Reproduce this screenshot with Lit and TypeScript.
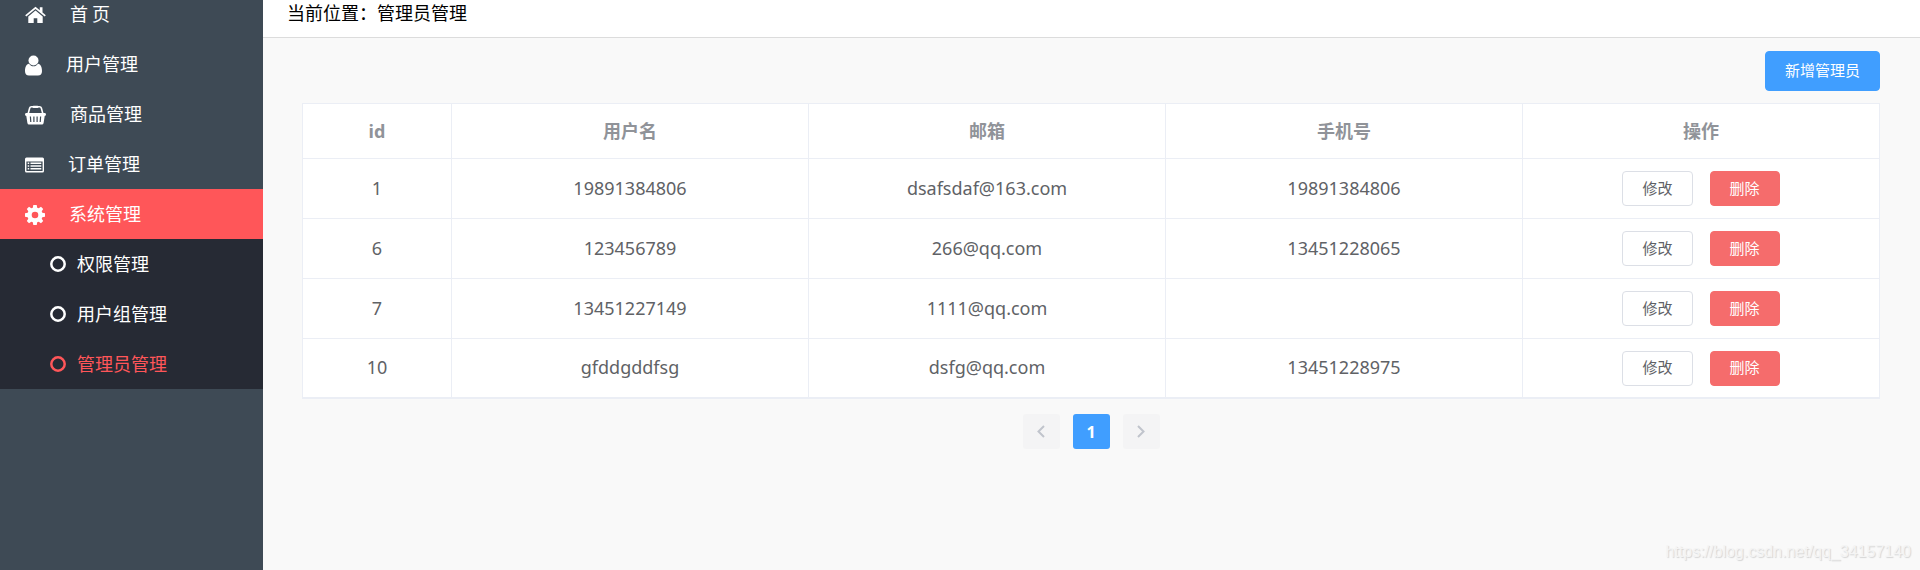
import { LitElement, html, css, svg } from "lit";
import { customElement, state } from "lit/decorators.js";

interface Admin {
  id: number;
  name: string;
  email: string;
  phone: string;
}

const icons = {
  home: svg`<svg class="glyph" width="21" height="18" viewBox="0 0 21 18"><path d="M10.500 0.800 L0.200 9.300 L1.300 10.600 L10.500 3 L19.700 10.600 L20.800 9.300 L17.500 6.500 V1.200 H14.800 V4.300 Z M10.500 4.500 L3.300 10.400 V17 H8.700 V12.200 H12.300 V17 H17.700 V10.400 Z"/></svg>`,
  user: svg`<svg class="glyph" width="17" height="21" viewBox="0 0 17 21"><circle cx="8.500" cy="5.500" r="5"/><path d="M4 8.700 C1.200 9.300 0 12 0 16.200 C0 19 1.500 20.500 4 20.500 H13 C15.500 20.500 17 19 17 16.200 C17 12 15.800 9.300 13 8.700 C11.800 10.400 10.300 11.300 8.500 11.300 S5.200 10.400 4 8.700 Z"/></svg>`,
  basket: svg`<svg class="glyph" width="21" height="20" viewBox="0 0 21 20"><path fill-rule="evenodd" d="M1 8 H20 Q21 8.200 21 9.500 Q21 10.900 19.700 11 L18.600 18 Q18.300 19.500 17 19.500 H4 Q2.700 19.500 2.400 18 L1.300 11 Q0 10.900 0 9.500 Q0 8.200 1 8 Z M4.800 11.500 L5.200 17 H6.400 L6 11.500 Z M8.300 11.500 V17 H9.500 V11.500 Z M11.500 11.500 V17 H12.700 V11.500 Z M15 11.500 L14.600 17 H15.800 L16.200 11.500 Z"/><path class="line" d="M3.200 8.500 L4.700 3 Q5 1.800 6.500 1.800 H14.500 Q16 1.800 16.300 3 L17.800 8.500"/><rect x="7.500" y="0.800" width="6" height="2.200" rx="1"/></svg>`,
  list: svg`<svg class="glyph" width="19" height="16" viewBox="0 0 19 16"><path fill-rule="evenodd" d="M1.500 0.500 H17.500 Q19 0.500 19 2 V14 Q19 15.500 17.500 15.500 H1.500 Q0 15.500 0 14 V2 Q0 0.500 1.500 0.500 Z M1.400 4.500 V13.500 Q1.400 14.100 2 14.100 H17 Q17.600 14.100 17.600 13.500 V4.500 Z"/><path d="M2.700 5.500 H4.200 V7 H2.700 Z M5.500 5.500 H16.300 V7 H5.500 Z M2.700 8.300 H4.200 V9.800 H2.700 Z M5.500 8.300 H16.300 V9.800 H5.500 Z M2.700 11.100 H4.200 V12.600 H2.700 Z M5.500 11.100 H16.300 V12.600 H5.500 Z"/></svg>`,
  gear: svg`<svg class="glyph" width="20" height="20" viewBox="0 0 20 20"><path fill-rule="evenodd" d="M8.300 0 H11.700 L12.200 2.700 L13.700 3.300 L16 1.800 L18.200 4 L16.700 6.300 L17.300 7.800 L20 8.300 V11.700 L17.300 12.200 L16.700 13.700 L18.200 16 L16 18.200 L13.700 16.700 L12.200 17.300 L11.700 20 H8.300 L7.800 17.300 L6.300 16.700 L4 18.200 L1.800 16 L3.300 13.700 L2.700 12.200 L0 11.700 V8.300 L2.700 7.800 L3.300 6.300 L1.800 4 L4 1.800 L6.300 3.300 L7.800 2.700 Z M10 6.700 A3.300 3.300 0 1 0 10 13.300 A3.300 3.300 0 1 0 10 6.700 Z"/></svg>`,
};

@customElement("app-root")
export class AppRoot extends LitElement {
  @state() private current = "管理员管理";

  private menu = [
    { label: "首 页", icon: icons.home },
    { label: "用户管理", icon: icons.user },
    { label: "商品管理", icon: icons.basket },
    { label: "订单管理", icon: icons.list },
    { label: "系统管理", icon: icons.gear, active: true },
  ];

  private submenu = ["权限管理", "用户组管理", "管理员管理"];

  private admins: Admin[] = [
    { id: 1, name: "19891384806", email: "dsafsdaf@163.com", phone: "19891384806" },
    { id: 6, name: "123456789", email: "266@qq.com", phone: "13451228065" },
    { id: 7, name: "13451227149", email: "1111@qq.com", phone: "" },
    { id: 10, name: "gfddgddfsg", email: "dsfg@qq.com", phone: "13451228975" },
  ];

  static styles = css`
    :host {
      display: flex;
      position: relative;
      min-height: 100vh;
      overflow: hidden;
      background: #f9f9f9;
      color: #000;
      font: 18px/24px "Noto Sans", "Noto Sans CJK SC", sans-serif;
    }
    * { box-sizing: border-box; }
    .side { flex: 0 0 263px; background: #3e4a55; }
    .menu { margin: -11px 0 0; padding: 0; list-style: none; }
    .sub { margin: 0; padding: 0; list-style: none; background: #262a34; }
    .link {
      display: flex;
      align-items: center;
      height: 50px;
      padding-left: 25px;
      gap: 24px;
      color: #fff;
      text-decoration: none;
      font-family: "Noto Sans CJK SC", sans-serif;
    }
    .link.active { background: #ff5659; }
    .sub .link { padding-left: 50px; gap: 11px; }
    .sub .link.current { color: #ff5659; }
    .label { padding-bottom: 2px; }
    .glyph { flex: none; margin-top: 2px; fill: currentColor; }
    .line { fill: none; stroke: currentColor; stroke-width: 1.6; }
    .ring { flex: none; fill: none; stroke: currentColor; stroke-width: 2.5; }
    .main { flex: 1; min-width: 0; }
    .crumb {
      height: 38px;
      padding: 0 24px;
      background: #fff;
      border-bottom: 1px solid #dcdcdc;
      font-family: "Noto Sans CJK SC", sans-serif;
    }
    .content { padding: 13px 40px 0 39px; }
    .tools { display: flex; justify-content: flex-end; margin-bottom: 12px; }
    .btn {
      height: 35px;
      padding: 0 19px 2px;
      border: 1px solid #dcdfe6;
      border-radius: 4px;
      background: #fff;
      color: #606266;
      font: 15px/20px "Noto Sans CJK SC", sans-serif;
    }
    .btn.primary { height: 40px; background: #409eff; border-color: #409eff; color: #fff; }
    .btn.danger { background: #f56c6c; border-color: #f56c6c; color: #fff; }
    .grid {
      width: 100%;
      table-layout: fixed;
      border-spacing: 0;
      border: solid #ebeef5;
      border-width: 1px 0 0 1px;
      background: #fff;
      color: #606266;
      text-align: center;
    }
    .grid th, .grid td {
      padding: 0;
      height: 60px;
      border: solid #ebeef5;
      border-width: 0 1px 1px 0;
    }
    .grid td.text { padding-bottom: 2px; }
    .grid tbody tr:last-child td { border-bottom-width: 2px; }
    .grid th { height: 55px; color: #909399; font-weight: 700; }
    .grid .narrow { width: 149px; }
    .ops { display: flex; justify-content: center; gap: 17px; }
    .pager { display: flex; justify-content: center; gap: 13px; margin-top: 15px; }
    .page {
      display: grid;
      place-items: center;
      width: 37px;
      height: 35px;
      padding: 0;
      border: 0;
      border-radius: 3px;
      background: #f4f4f5;
      color: #c0c4cc;
      font: 700 16px/24px "Noto Sans", sans-serif;
    }
    .page.on { background: #409eff; color: #fff; }
    .arrow { fill: none; stroke: currentColor; stroke-width: 2; }
    .mark {
      position: absolute;
      right: 9px;
      bottom: 8px;
      color: #f4f4f4;
      text-shadow: 1px 1px 1px #d4d4d4;
      font: 16px/20px "Liberation Sans", sans-serif;
    }
  `;

  render() {
    return html`
      <nav class="side">
        <ul class="menu">
          ${this.menu.map(
            (m) => html`<li>
              <a class="link ${m.active ? "active" : ""}" href="#">${m.icon}<span class="label">${m.label}</span></a>
            </li>`
          )}
          <li>
            <ul class="sub">
              ${this.submenu.map(
                (s) => html`<li>
                  <a class="link ${s === this.current ? "current" : ""}" href="#" @click=${() => (this.current = s)}
                    ><svg class="ring" width="16" height="16" viewBox="0 0 16 16"><circle cx="8" cy="8" r="6.7" /></svg
                    ><span class="label">${s}</span></a
                  >
                </li>`
              )}
            </ul>
          </li>
        </ul>
      </nav>
      <main class="main">
        <div class="crumb">当前位置：${this.current}</div>
        <div class="content">
          <div class="tools"><button class="btn primary">新增管理员</button></div>
          <table class="grid">
            <thead>
              <tr>
                <th class="narrow">id</th>
                <th>用户名</th>
                <th>邮箱</th>
                <th>手机号</th>
                <th>操作</th>
              </tr>
            </thead>
            <tbody>
              ${this.admins.map(
                (a) => html`<tr>
                  <td class="text">${a.id}</td>
                  <td class="text">${a.name}</td>
                  <td class="text">${a.email}</td>
                  <td class="text">${a.phone}</td>
                  <td>
                    <div class="ops"><button class="btn">修改</button><button class="btn danger">删除</button></div>
                  </td>
                </tr>`
              )}
            </tbody>
          </table>
          <div class="pager">
            <button class="page" disabled aria-label="上一页">
              <svg class="arrow" width="8" height="13" viewBox="0 0 8 13"><path d="M7 1 L1.500 6.500 L7 12" /></svg>
            </button>
            <button class="page on">1</button>
            <button class="page" disabled aria-label="下一页">
              <svg class="arrow" width="8" height="13" viewBox="0 0 8 13"><path d="M1 1 L6.500 6.500 L1 12" /></svg>
            </button>
          </div>
        </div>
      </main>
      <div class="mark">https://blog.csdn.net/qq_34157140</div>
    `;
  }
}
